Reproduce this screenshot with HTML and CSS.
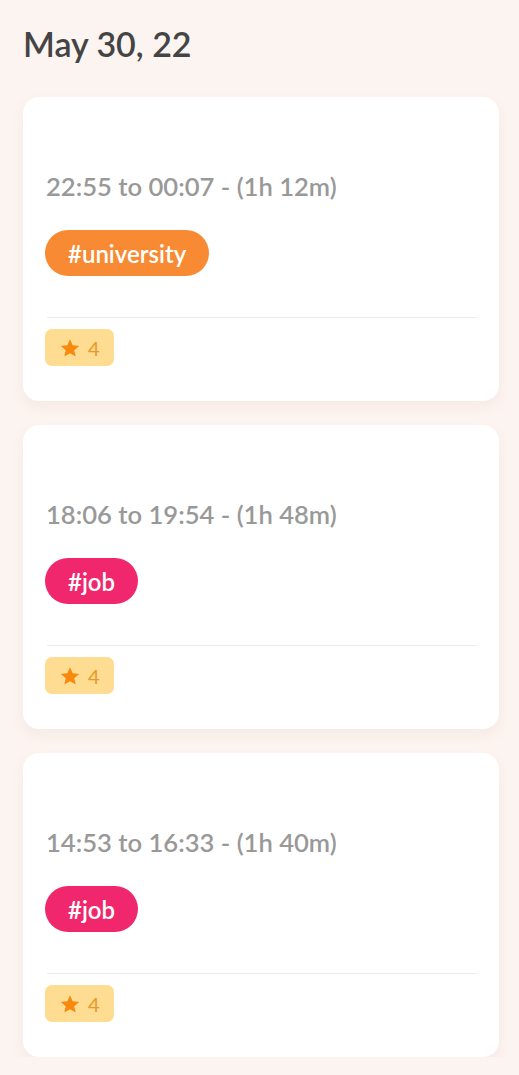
FILE: index.html
```html
<!DOCTYPE html>
<html>
<head>
<meta charset="utf-8">
<link rel="stylesheet" href="styles.css">
</head>
<body>
<div class="page">
  <h1 class="date">May 30, 22</h1>
  <div class="list">
    <div class="card">
      <div class="time">22:55 to 00:07 - (1h 12m)</div>
      <div class="tags"><span class="tag tag-orange">#university</span></div>
      <div class="divider"></div>
      <div class="footer"><span class="rating"><svg class="star" viewBox="0 0 24 24"><path d="M12 2.5l2.9 6.6 7.1.6-5.4 4.7 1.6 7-6.2-3.7-6.2 3.7 1.6-7L2 9.7l7.1-.6z"/></svg><span class="num">4</span></span></div>
    </div>
    <div class="card">
      <div class="time">18:06 to 19:54 - (1h 48m)</div>
      <div class="tags"><span class="tag tag-pink">#job</span></div>
      <div class="divider"></div>
      <div class="footer"><span class="rating"><svg class="star" viewBox="0 0 24 24"><path d="M12 2.5l2.9 6.6 7.1.6-5.4 4.7 1.6 7-6.2-3.7-6.2 3.7 1.6-7L2 9.7l7.1-.6z"/></svg><span class="num">4</span></span></div>
    </div>
    <div class="card">
      <div class="time">14:53 to 16:33 - (1h 40m)</div>
      <div class="tags"><span class="tag tag-pink">#job</span></div>
      <div class="divider"></div>
      <div class="footer"><span class="rating"><svg class="star" viewBox="0 0 24 24"><path d="M12 2.5l2.9 6.6 7.1.6-5.4 4.7 1.6 7-6.2-3.7-6.2 3.7 1.6-7L2 9.7l7.1-.6z"/></svg><span class="num">4</span></span></div>
    </div>
  </div>
</div>
</body>
</html>
```
FILE: styles.css
```css
html, body {
  margin: 0;
  padding: 0;
  background: #fcf4f0;
  font-family: Lato, "Open Sans", sans-serif;
}
.page {
  padding: 22px 20px 0 23px;
}
.date {
  margin: 0;
  font-size: 34px;
  font-weight: 600;
  color: #444;
  line-height: 44px;
}
.list {
  margin-top: 31px;
  display: flex;
  flex-direction: column;
  gap: 24px;
}
.card {
  background: #fff;
  border-radius: 16px;
  padding: 74px 22px 35px 22px;
  box-shadow: 0 6px 12px rgba(220, 190, 175, 0.18);
}
.time {
  font-size: 25.6px;
  font-weight: 600;
  line-height: 30px;
  color: #999;
  padding-left: 1px;
}
.tags {
  margin-top: 29px;
  display: flex;
}
.tag {
  height: 46px;
  border-radius: 23px;
  padding: 0 23px;
  display: inline-flex;
  align-items: center;
  color: #fff;
  font-size: 24px;
  font-weight: 600;
}
.tag-orange { background: #f88a33; }
.tag-pink { background: #f0276c; }
.divider {
  margin: 41px 0 11px 2px;
  height: 1px;
  background: #ececec;
}
.footer { display: flex; }
.rating {
  height: 37px;
  width: 69px;
  box-sizing: border-box;
  border-radius: 7px;
  background: #fedc91;
  display: inline-flex;
  align-items: center;
  padding-left: 14px;
  gap: 7px;
}
.star {
  width: 22px;
  height: 22px;
  fill: #f7890f;
}
.num {
  font-size: 20px;
  color: #e6992a;
}
```
